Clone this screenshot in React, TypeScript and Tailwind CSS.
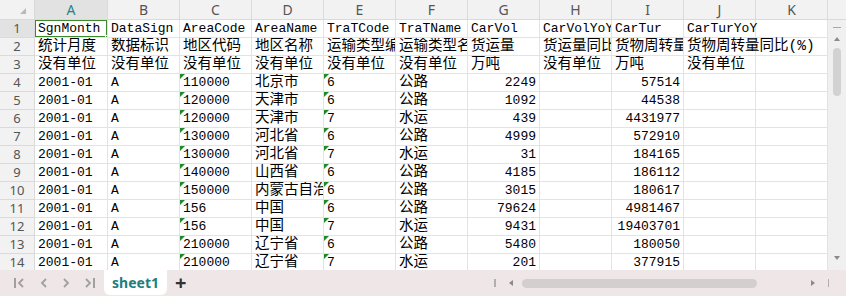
import React from "react";

type Cell = { t?: string; r?: boolean; tri?: boolean; ov?: boolean; cjk?: boolean };

const isCJK = (s: string) => /[\u3000-\u9fff]/.test(s);

const letters = ["A", "B", "C", "D", "E", "F", "G", "H", "I", "J", "K"];

const raw: (string | number | null)[][] = [
  ["SgnMonth", "DataSign", "AreaCode", "AreaName", "TraTCode", "TraTName", "CarVol", "CarVolYoY", "CarTur", "CarTurYoY", null],
  ["统计月度", "数据标识", "地区代码", "地区名称", "运输类型编码", "运输类型名称", "货运量", "货运量同比", "货物周转量", "货物周转量同比(%)", null],
  ["没有单位", "没有单位", "没有单位", "没有单位", "没有单位", "没有单位", "万吨", "没有单位", "万吨", "没有单位", null],
];

const data: [string, string, string, number, string, number, number][] = [
  ["110000", "北京市", "6", 0, "公路", 2249, 57514],
  ["120000", "天津市", "6", 0, "公路", 1092, 44538],
  ["120000", "天津市", "7", 0, "水运", 439, 4431977],
  ["130000", "河北省", "6", 0, "公路", 4999, 572910],
  ["130000", "河北省", "7", 0, "水运", 31, 184165],
  ["140000", "山西省", "6", 0, "公路", 4185, 186112],
  ["150000", "内蒙古自治区", "6", 0, "公路", 3015, 180617],
  ["156", "中国", "6", 0, "公路", 79624, 4981467],
  ["156", "中国", "7", 0, "水运", 9431, 19403701],
  ["210000", "辽宁省", "6", 0, "公路", 5480, 180050],
  ["210000", "辽宁省", "7", 0, "水运", 201, 377915],
];

const rows: Cell[][] = [
  ...raw.map((r, ri) =>
    r.map((v, ci) => {
      const c: Cell = { t: v === null ? undefined : String(v) };
      if (ci === 9 && ri < 2) c.ov = true;
      return c;
    })
  ),
  ...data.map((d) => [
    { t: "2001-01" },
    { t: "A" },
    { t: d[0], tri: true },
    { t: d[1] },
    { t: d[2], tri: true },
    { t: d[4] },
    { t: String(d[5]), r: true },
    {},
    { t: String(d[6]), r: true },
    {},
    {},
  ]),
];

const mono = { fontFamily: "'Liberation Mono', 'Noto Sans CJK SC', monospace" };

function GridCell({ c, ci, sel }: { c: Cell; ci: number; sel: boolean }) {
  const w = ci === 0 ? "w-[73px]" : "w-[72px]";
  const cjk = c.t ? isCJK(c.t) : false;
  return (
    <div
      className={`relative box-border h-[18px] shrink-0 border-r border-b border-[#e3e3e3] whitespace-nowrap px-[3px] leading-[17px] text-black ${w} ${
        c.ov ? "z-10 overflow-visible" : "overflow-hidden"
      } ${c.r ? "text-right" : "text-left"} ${cjk ? "text-[14.5px]" : "text-[13px]"}`}
      style={mono}
    >
      {c.tri && (
        <div className="absolute left-0 top-0 h-0 w-0 border-t-[5px] border-r-[5px] border-t-[#1f8a2a] border-r-transparent" />
      )}
      {c.t}
      {sel && (
        <div className="absolute -left-[1px] -top-[1px] h-[19px] w-[74px] border-2 border-[#3d8a2e]">
          <div className="absolute -bottom-[4px] -right-[4px] h-[5px] w-[5px] bg-[#3d8a2e] border border-white" />
        </div>
      )}
    </div>
  );
}

export default function App() {
  return (
    <div
      className="flex h-[296px] w-[846px] flex-col overflow-hidden bg-white"
      style={{ fontFamily: "'Noto Sans', 'Liberation Sans', sans-serif" }}
    >
      {/* column header */}
      <div className="flex h-[20px] shrink-0 bg-[#f2f2f2]">
        <div className="relative box-border h-[20px] w-[35px] shrink-0 border-r border-b border-[#d9d9d9]">
          <div className="absolute left-[20px] top-[8px] h-0 w-0 border-b-[6px] border-l-[6px] border-l-transparent border-b-[#b9b9b9]" />
        </div>
        {letters.map((l, i) => (
          <div
            key={l}
            className={`box-border flex h-[20px] shrink-0 items-center justify-center border-r border-b border-[#dadada] text-[14px] ${
              i === 0 ? "w-[73px] bg-[#e2e2e2] text-[#1f8585]" : "w-[72px] text-[#555]"
            }`}
          >
            {l}
          </div>
        ))}
        <div className="box-border h-[20px] flex-1 border-b border-[#dadada]" />
      </div>

      {/* body */}
      <div className="flex h-[250px] shrink-0 overflow-hidden">
        <div className="flex w-[828px] shrink-0 flex-col">
          {rows.map((r, ri) => (
            <div key={ri} className="flex h-[18px] shrink-0">
              <div
                className={`box-border flex h-[18px] w-[35px] shrink-0 items-center justify-center border-r border-b border-[#dadada] text-[13px] text-[#555] ${
                  ri === 0 ? "bg-[#e2e2e2]" : "bg-[#f2f2f2]"
                }`}
              >
                {ri + 1}
              </div>
              {r.map((c, ci) => (
                <GridCell key={ci} c={c} ci={ci} sel={ri === 0 && ci === 0} />
              ))}
            </div>
          ))}
        </div>
        {/* vertical scrollbar */}
        <div className="relative flex w-[18px] shrink-0 flex-col items-center bg-[#f0f0f0]">
          <div className="mt-[7px] h-[1px] w-[8px] bg-[#a8a8a8]" />
          <div className="mt-[9px] h-0 w-0 border-x-[3px] border-b-[4px] border-x-transparent border-b-[#8a8a8a]" />
          <div className="mt-[7px] h-[48px] w-[8px] rounded-full bg-[#d2d2d2]" />
          <div className="absolute top-[236px] h-0 w-0 border-x-[3px] border-t-[4px] border-x-transparent border-t-[#8a8a8a]" />
        </div>
      </div>

      {/* sheet tab bar */}
      <div className="flex h-[26px] shrink-0 items-center bg-[#efe7e7] text-[#9a9a9a]">
        <div className="ml-[14px] flex items-center">
          <div className="h-[10px] w-[2px] bg-[#a0a0a0]" />
          <svg width="8" height="10" viewBox="0 0 8 10" className="ml-[1px]">
            <path d="M6 1 L2 5 L6 9" stroke="#a0a0a0" strokeWidth="1.8" fill="none" />
          </svg>
        </div>
        <svg width="8" height="10" viewBox="0 0 8 10" className="ml-[15px]">
          <path d="M6 1 L2 5 L6 9" stroke="#a0a0a0" strokeWidth="1.8" fill="none" />
        </svg>
        <svg width="8" height="10" viewBox="0 0 8 10" className="ml-[14px]">
          <path d="M2 1 L6 5 L2 9" stroke="#a0a0a0" strokeWidth="1.8" fill="none" />
        </svg>
        <div className="ml-[14px] flex items-center">
          <svg width="8" height="10" viewBox="0 0 8 10">
            <path d="M2 1 L6 5 L2 9" stroke="#a0a0a0" strokeWidth="1.8" fill="none" />
          </svg>
          <div className="ml-[1px] h-[10px] w-[2px] bg-[#a0a0a0]" />
        </div>
        <div className="ml-[9px] flex h-[25px] w-[63px] items-center justify-center self-start rounded-b-[6px] bg-white text-[14px] font-bold text-[#1d7f80]">
          sheet1
        </div>
        <div className="ml-[8px] text-[20px] font-bold leading-none text-[#333]">+</div>
        <div className="ml-[308px] h-[8px] w-[2px] bg-[#b0b0b0]" />
        <div className="ml-[13px] h-0 w-0 border-y-[3px] border-r-[4px] border-y-transparent border-r-[#8a8a8a]" />
        <div className="ml-[9px] h-[9px] w-[235px] rounded-full bg-[#d4cfcf]" />
        <div className="ml-[54px] h-0 w-0 border-y-[3px] border-l-[4px] border-y-transparent border-l-[#8a8a8a]" />
        <div className="ml-[13px] h-[8px] w-[1px] bg-[#b0b0b0]" />
      </div>
    </div>
  );
}
